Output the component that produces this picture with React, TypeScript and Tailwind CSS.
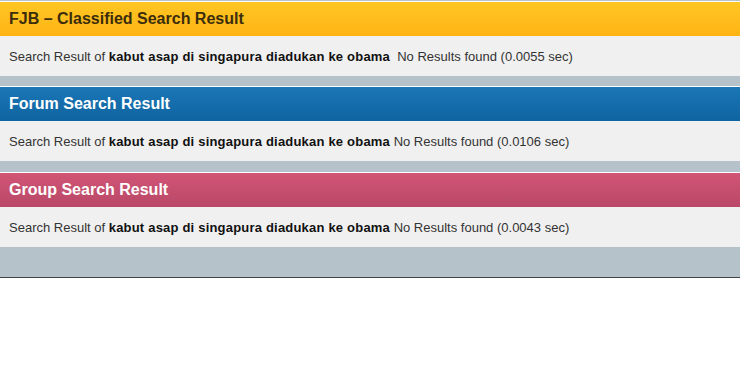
const query = 'kabut asap di singapura diadukan ke obama';

const sections = [
  {
    title: 'FJB – Classified Search Result',
    head: 'bg-gradient-to-b from-[#ffc623] to-[#ffb414] text-[#3b2d0c]',
    time: '0.0055',
    extra: true,
    gap: '',
  },
  {
    title: 'Forum Search Result',
    head: 'bg-gradient-to-b from-[#1b76b6] to-[#0e64a0] text-white',
    time: '0.0106',
    extra: false,
    gap: 'mt-[10px]',
  },
  {
    title: 'Group Search Result',
    head: 'bg-gradient-to-b from-[#d15575] to-[#b94868] text-white',
    time: '0.0043',
    extra: false,
    gap: 'mt-[11px]',
  },
];

export default function App() {
  return (
    <div className="w-[740px] h-[384px] bg-white font-['Liberation_Sans',Arial,sans-serif]">
      <div className="bg-[#b5c2c9] border-b border-[#444]">
        <div className="h-px bg-[#b5c2c9]" />
        {sections.map((s) => (
          <div key={s.title} className={s.gap}>
            <div className="border-t border-white">
              <div className={`h-[34px] flex items-center px-[9px] text-[16px] font-bold ${s.head}`}>
                {s.title}
              </div>
            </div>
            <div className="h-[40px] flex items-center pt-px px-[9px] bg-[#f0f0f0] text-[13px] text-[#333] whitespace-pre">
              <span>Search Result of </span>
              <b className="text-[#111] tracking-[0.2px]">{query}</b>
              <span>{s.extra ? '  ' : ' '}No Results found ({s.time} sec)</span>
            </div>
          </div>
        ))}
        <div className="h-[30px]" />
      </div>
    </div>
  );
}
